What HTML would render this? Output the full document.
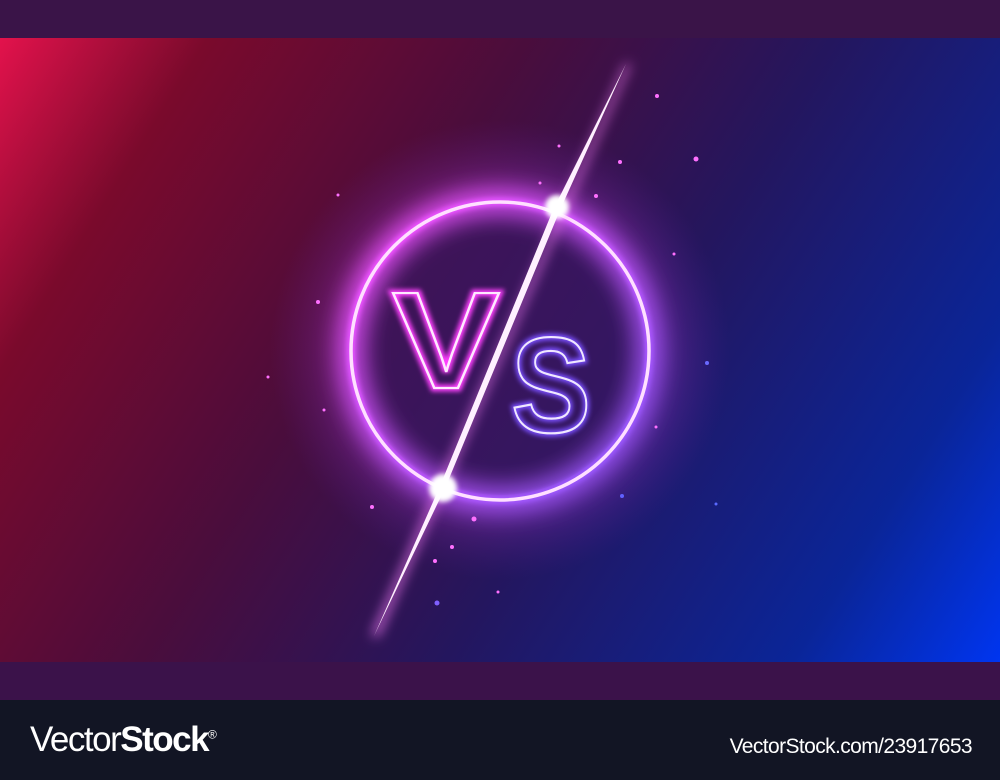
<!DOCTYPE html>
<html><head><style>
html,body{margin:0;padding:0;width:1000px;height:780px;overflow:hidden;background:#121524;font-family:"Liberation Sans",sans-serif}
.top{position:absolute;left:0;top:0;width:1000px;height:38px;background:#3a1448}
.strip{position:absolute;left:0;top:662px;width:1000px;height:38px;background:#3b124a}
.foot{position:absolute;left:0;top:700px;width:1000px;height:80px;background:#121524;color:#fff}
svg.main{position:absolute;left:0;top:38px}
</style></head><body>
<div class="top"></div>
<svg class="main" width="1000" height="624" viewBox="0 38 1000 624">
<defs>
<linearGradient id="bg" x1="0" y1="38" x2="1000" y2="662" gradientUnits="userSpaceOnUse">
<stop offset="0" stop-color="#e3124c"/>
<stop offset="0.15" stop-color="#7a0a2c"/>
<stop offset="0.38" stop-color="#4a0d3c"/>
<stop offset="0.6" stop-color="#24165e"/>
<stop offset="0.85" stop-color="#0a2598"/>
<stop offset="1" stop-color="#0035f0"/>
</linearGradient>
<radialGradient id="glow" cx="500" cy="350" r="230" gradientUnits="userSpaceOnUse">
<stop offset="0.5" stop-color="#6a2aa0" stop-opacity="0.35"/>
<stop offset="0.65" stop-color="#c040e0" stop-opacity="0.4"/>
<stop offset="1" stop-color="#6020a0" stop-opacity="0"/>
</radialGradient>
<linearGradient id="ring" x1="350" y1="200" x2="650" y2="500" gradientUnits="userSpaceOnUse">
<stop offset="0" stop-color="#ff50ff"/><stop offset="1" stop-color="#8a5aff"/>
</linearGradient>
<filter id="bl" x="-50%" y="-50%" width="200%" height="200%"><feGaussianBlur stdDeviation="6"/></filter>
<filter id="bl3" x="-50%" y="-50%" width="200%" height="200%"><feGaussianBlur stdDeviation="12"/></filter>
<filter id="bl2" x="-50%" y="-50%" width="200%" height="200%"><feGaussianBlur stdDeviation="2.5"/></filter>
</defs>
<rect x="0" y="38" width="1000" height="624" fill="url(#bg)"/>
<circle cx="500" cy="350" r="230" fill="url(#glow)"/>
<circle cx="500" cy="350" r="145" fill="#2a0f4e" opacity="0.5"/>
<circle cx="500" cy="351" r="149" fill="none" stroke="url(#ring)" stroke-width="22" filter="url(#bl3)"/>
<circle cx="500" cy="351" r="149" fill="none" stroke="url(#ring)" stroke-width="9" filter="url(#bl2)"/>
<circle cx="500" cy="351" r="149" fill="none" stroke="#ffe0ff" stroke-width="3.5"/>
<polygon points="626,64 630,64 378,636 372,636" fill="#ff80ff" filter="url(#bl)"/>
<path d="M626,64 L553,210 L440,486 L374,636 L446,486 L560,210 Z" fill="#fff0ff"/>
<circle cx="557" cy="207" r="12" fill="#fff" filter="url(#bl2)"/>
<circle cx="443" cy="488" r="14" fill="#fff" filter="url(#bl2)"/>
<g font-family="Liberation Sans, sans-serif" font-weight="bold" fill="none">
<text x="392" y="388" font-size="138" textLength="108" lengthAdjust="spacingAndGlyphs" stroke="#ff40ff" stroke-width="7" filter="url(#bl2)">V</text>
<text x="392" y="388" font-size="138" textLength="108" lengthAdjust="spacingAndGlyphs" stroke="#ffe8ff" stroke-width="2.2">V</text>
<text x="511" y="432" font-size="136" textLength="80" lengthAdjust="spacingAndGlyphs" stroke="#7a50ff" stroke-width="7" filter="url(#bl2)">S</text>
<text x="511" y="432" font-size="136" textLength="80" lengthAdjust="spacingAndGlyphs" stroke="#f0e8ff" stroke-width="2.2">S</text>
</g>
<g fill="#ff70ff">
<circle cx="657" cy="96" r="2"/><circle cx="696" cy="159" r="2.5"/><circle cx="620" cy="162" r="2"/><circle cx="559" cy="146" r="1.5"/>
<circle cx="596" cy="196" r="2"/><circle cx="318" cy="302" r="2"/><circle cx="268" cy="377" r="1.5"/><circle cx="324" cy="410" r="1.5"/>
<circle cx="674" cy="254" r="1.5"/><circle cx="707" cy="363" r="2" fill="#6a6aff"/><circle cx="656" cy="427" r="1.5"/>
<circle cx="372" cy="507" r="2"/><circle cx="474" cy="519" r="2.5"/><circle cx="452" cy="547" r="2"/><circle cx="435" cy="561" r="2"/>
<circle cx="437" cy="603" r="2.5" fill="#8060ff"/><circle cx="498" cy="592" r="1.5"/><circle cx="622" cy="496" r="2" fill="#6060ff"/>
<circle cx="716" cy="504" r="1.5" fill="#5a6aff"/><circle cx="338" cy="195" r="1.5"/><circle cx="540" cy="183" r="1.5"/>
</g>
</svg>
<div class="strip"></div>
<div class="foot">
<div style="position:absolute;left:30px;top:20px;font-size:35px;letter-spacing:-1.5px;font-weight:300">Vector<b style="font-weight:bold">Stock</b><sup style="font-size:12px">®</sup></div>
<div style="position:absolute;right:28px;top:35px;font-size:21px;letter-spacing:-0.6px">VectorStock.com/23917653</div>
</div>
</body></html>
